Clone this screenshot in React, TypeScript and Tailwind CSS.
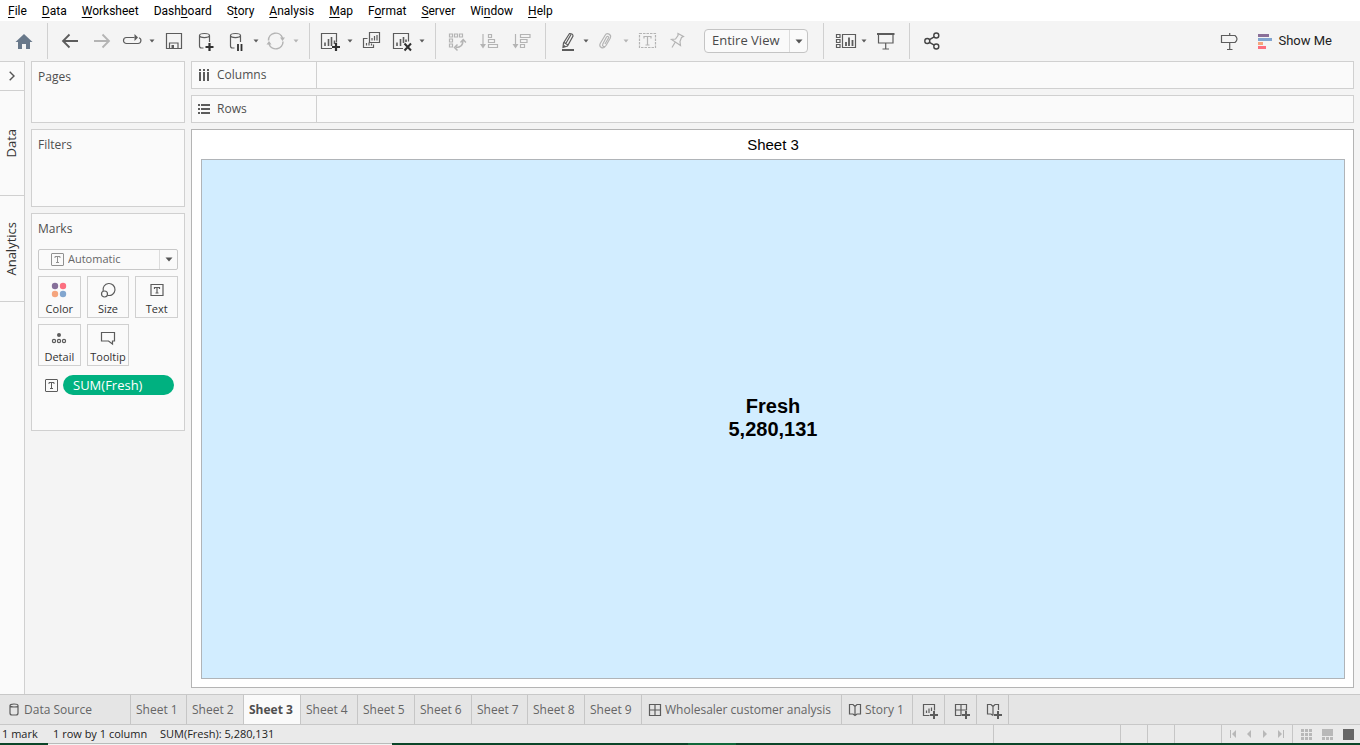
import type { ReactNode } from "react";

type IconProps = { children: ReactNode; className?: string };

function Icon({ children, className = "" }: IconProps) {
  return (
    <svg
      viewBox="0 0 20 20"
      className={`size-5 shrink-0 overflow-visible ${className}`}
      fill="none"
      stroke="currentColor"
      strokeWidth="1.2"
      aria-hidden="true"
    >
      {children}
    </svg>
  );
}

const Plus = ({ x, y, s = 4.5, w = 2 }: { x: number; y: number; s?: number; w?: number }) => (
  <path d={`M${x - s} ${y}H${x + s}M${x} ${y - s}V${y + s}`} strokeWidth={w} />
);

function Caret() {
  return (
    <svg viewBox="0 0 12 6" className="h-[6px] w-3 shrink-0" fill="currentColor" aria-hidden="true">
      <path d="M3.5 1.5h5L6 4.5z" />
    </svg>
  );
}

function Tool({
  label,
  children,
  menu = false,
  off = false,
}: {
  label: string;
  children: ReactNode;
  menu?: boolean;
  off?: boolean;
}) {
  return (
    <button
      type="button"
      aria-label={label}
      className={`flex h-full items-center ${menu ? "w-10" : "w-8 justify-center"} ${off ? "text-[#b4b4b4]" : "text-[#5c5c5c]"}`}
    >
      {menu ? (
        <>
          <span className="flex w-7 justify-center">
            <Icon>{children}</Icon>
          </span>
          <Caret />
        </>
      ) : (
        <Icon>{children}</Icon>
      )}
    </button>
  );
}

function Group({ children }: { children: ReactNode }) {
  return <div className="flex h-9 items-center border-r border-[#d0d0d0] pl-[6px] pr-[7px]">{children}</div>;
}

const Cylinder = ({ x }: { x: number }) => (
  <path
    d={`M${x + 4} 17H${x + 2}Q${x} 17 ${x} 15V4.5M${x + 10} 4.5V11M${x} 4.5C${x} 1.8 ${x + 10} 1.8 ${x + 10} 4.5C${x + 10} 7.2 ${x} 7.2 ${x} 4.5Z`}
  />
);

function TextGlyph({ className = "" }: { className?: string }) {
  return (
    <svg viewBox="0 0 13 13" className={`size-[13px] shrink-0 ${className}`} fill="none" stroke="currentColor" aria-hidden="true">
      <rect x=".5" y=".5" width="12" height="12" rx=".5" />
      <path d="M4 5V3.5h5V5M6.5 3.5v6M5 9.5h3" />
    </svg>
  );
}

const MENUS = [
  ["", "F", "ile"],
  ["", "D", "ata"],
  ["", "W", "orksheet"],
  ["Dash", "b", "oard"],
  ["S", "t", "ory"],
  ["", "A", "nalysis"],
  ["", "M", "ap"],
  ["F", "o", "rmat"],
  ["", "S", "erver"],
  ["Wi", "n", "dow"],
  ["", "H", "elp"],
];

function MenuBar() {
  return (
    <nav className="flex h-[21px] shrink-0 items-center gap-[15px] bg-white pl-2 font-['Roboto',sans-serif] text-[12px] text-black">
      {MENUS.map(([before, key, after]) => (
        <button key={before + key + after} type="button" className="leading-5">
          {before}
          <span className="underline underline-offset-2">{key}</span>
          {after}
        </button>
      ))}
    </nav>
  );
}

function Toolbar() {
  return (
    <div className="flex h-10 shrink-0 items-center">
      <div className="flex h-9 items-center border-r border-[#d0d0d0] pl-2 pr-[7px]">
        <Tool label="Home">
          <path d="M1.5 11L10 3l8.500 8H16v7h-4v-5H8v5H4v-7z" fill="#68788a" stroke="none" />
        </Tool>
      </div>
      <Group>
        <Tool label="Undo">
          <path d="M18 10H3M9.500 3.500L3 10l6.500 6.500" strokeWidth="1.8" />
        </Tool>
        <Tool label="Redo" off>
          <path d="M2 10h15M10.500 3.500L17 10l-6.500 6.500" strokeWidth="1.8" />
        </Tool>
        <Tool label="Replay" menu>
          <path d="M12.500 6.500H4.500a3 3 0 0 0 0 6h11.500a3 3 0 0 0 1-5.800" />
          <path d="M12.500 3v7l3.500-3.500z" fill="currentColor" stroke="none" />
        </Tool>
        <Tool label="Save">
          <path d="M2.500 2.500h15v15h-15zM5.500 17.500v-5.500h8.500v5.500" />
          <path d="M7.500 14h2.500v3.500h-2.500z" fill="currentColor" stroke="none" />
        </Tool>
        <Tool label="New data source">
          <Cylinder x={3.5} />
          <g className="text-[#303030]">
            <Plus x={13.5} y={16} s={4} w={2.2} />
          </g>
        </Tool>
        <Tool label="Pause auto updates" menu>
          <Cylinder x={4.5} />
          <path d="M12 13v7M15.500 13v7" stroke="#303030" strokeWidth="1.8" />
        </Tool>
        <Tool label="Run update" menu off>
          <path d="M2.500 9.500A7.200 7.200 0 0 1 16.500 7M17 10.500A7.200 7.200 0 0 1 3 13" strokeWidth="1.5" />
          <path d="M14 6.500h5l-2.500 3.500zM.500 13.500h5L3 10z" fill="currentColor" stroke="none" />
        </Tool>
      </Group>
      <Group>
        <Tool label="New worksheet" menu>
          <path d="M12 17.500H1.500v-15h15v9" />
          <path d="M5 11.500v3.500M8.500 8v7M11.500 6v9M14.500 9.500V13" strokeWidth="1.6" />
          <g className="text-[#303030]">
            <Plus x={16} y={16} s={4} w={2.2} />
          </g>
        </Tool>
        <Tool label="Duplicate">
          <path d="M7.500 1.500h10v10h-10zM5.500 7.500h-4v9h10v-3M10 7v2.500M12.500 5v4.500M15 4v5.500M4.500 12v2.500M7 11.500v3M9.500 12.500v2" />
        </Tool>
        <Tool label="Clear sheet" menu>
          <path d="M11 17.500H1.500v-15h15v8" />
          <path d="M5 11.500v3.500M8.500 8v7M11.500 6v6M14 8.500V11" strokeWidth="1.6" />
          <path d="M12.500 12.500l6.500 7M19 12.500l-6.500 7" stroke="#303030" strokeWidth="2" />
        </Tool>
      </Group>
      <Group>
        <Tool label="Swap rows and columns" off>
          <path d="M1.500 3h3v3h-3zM6.500 3h3v3h-3zM11.500 3h3v3h-3zM1.500 8h3v3h-3zM1.500 13h3v3h-3z" />
          <path d="M8 16.500q7 0 7-7M12.500 11.500l2.700-3 2.700 3M9.500 13.500l-3 3 3 3" strokeWidth="1.5" />
        </Tool>
        <Tool label="Sort ascending" off>
          <path d="M3 3v13" />
          <path d="M0 13h6l-3 4.500z" fill="currentColor" stroke="none" />
          <path d="M8.500 3.500h3v3h-3zM8.500 8.500h6v3h-6zM8.500 13.500h9v3h-9z" />
        </Tool>
        <Tool label="Sort descending" off>
          <path d="M3.500 3v13" />
          <path d="M.500 13h6l-3 4.500z" fill="currentColor" stroke="none" />
          <path d="M8.500 3.500h9.500v3h-9.500zM8.500 8.500h6.500v3h-6.500zM8.500 13.500h4v3h-4z" />
        </Tool>
      </Group>
      <div className="flex h-9 items-center border-r border-[#d0d0d0] pl-[6px] pr-[15px]">
        <Tool label="Highlight" menu>
          <path d="M13.500 2.500q3.500 0 3.500 2.500l-5.500 10-4.500 1.500 .500-4.500zM8 11.500l4 2.500M9.500 13l5.500-9.500M7 16.500l2-2" />
          <path d="M6 19h12" strokeWidth="2" />
        </Tool>
        <Tool label="Group members" menu off>
          <path d="M4.500 12l4.500-7.500c2-3.500 7-1 5.200 2.700L10 14.500c-1.500 2.300-4.300.700-3.200-1.600L10.500 6c1-1.400 2.600-.400 2 1L9 13M4.500 12c-2.300 4 2.500 6.500 4.700 3.500" />
        </Tool>
        <Tool label="Show mark labels" off>
          <path d="M1.500 2.500h16v14h-16z" strokeDasharray="2.500 1" />
          <path d="M6 7.500V5.500h7v2M9.500 5.500v8.500M7.500 14h4" />
        </Tool>
        <Tool label="Fix axes" off>
          <path d="M8 2.500l5.500 3-2 1-1.500 4 .500 4L1.500 8.500l4-.500 2.500-3.500zM5 11.500l-3 5" />
        </Tool>
        <div className="ml-2 grid h-6 w-[104px] items-center rounded-sm border border-[#c4c4c4] bg-[#fafafa]">
          <select
            aria-label="Fit"
            className="col-start-1 row-start-1 h-full appearance-none bg-transparent pl-[7px] font-['Open_Sans',sans-serif] text-[13px] text-[#4a4a4a]"
          >
            <option>Entire View</option>
            <option>Standard</option>
          </select>
          <span className="pointer-events-none col-start-1 row-start-1 flex h-full w-[18px] items-center justify-center justify-self-end border-l border-[#dcdcdc]">
            <svg viewBox="0 0 8 5" className="h-[5px] w-2 fill-[#555]" aria-hidden="true">
              <path d="M.500.500h7L4 4.500z" />
            </svg>
          </span>
        </div>
      </div>
      <Group>
        <Tool label="Show or hide cards" menu>
          <path d="M8.500 3.500h13v13h-13zM2.500 3.500h3.500v3h-3.500zM2.500 8.500h3.500v3h-3.500zM2.500 13.500h3.500v3h-3.500z" />
          <path d="M12 11v4M15 6.500V15M18.500 9v6" strokeWidth="1.8" />
        </Tool>
        <Tool label="Presentation mode">
          <path d="M1 3h17.500" strokeWidth="2" />
          <path d="M2.500 3v9h14.500v-9M9.700 12v6M6.500 18h6.500" />
        </Tool>
      </Group>
      <div className="flex h-9 items-center pl-[6px]">
        <Tool label="Share">
          <g stroke="#444" strokeWidth="1.4">
            <circle cx="14.300" cy="4.500" r="2.500" />
            <circle cx="5.300" cy="10" r="2.500" />
            <circle cx="14.300" cy="15.500" r="2.500" />
            <path d="M7.500 8.700l4.700-2.900M7.500 11.300l4.700 2.900" />
          </g>
        </Tool>
      </div>
      <div className="ml-auto flex h-full items-center pr-7">
        <Tool label="Guide">
          <path d="M1.500 4.500h13.500q4 3.500 0 7h-13.500zM9.700 2v2.500M9.700 11.500v7M7 18.500h5.500" />
        </Tool>
        <button type="button" className="ml-3 flex items-center gap-[6px] font-['Roboto',sans-serif] text-[13px] text-[#222]">
          <svg viewBox="0 0 14 15" className="h-[15px] w-[14px]" aria-hidden="true">
            <path d="M0 0h11v3H0z" fill="#8a6f98" />
            <path d="M0 4h14v3H0z" fill="#82a5cf" />
            <path d="M0 8h5v3H0z" fill="#f6a47c" />
            <path d="M0 12h8v3H0z" fill="#fd6e7e" />
          </svg>
          Show Me
        </button>
      </div>
    </div>
  );
}

function SideRail() {
  return (
    <aside className="flex w-[25px] shrink-0 flex-col border-r border-t border-[#d0d0d0] bg-[#fafafa] font-['Open_Sans',sans-serif] text-[13px] text-[#333]">
      <button type="button" aria-label="Expand pane" className="flex h-[29px] items-center justify-center border-b border-[#d0d0d0]">
        <svg viewBox="0 0 6 10" className="h-[10px] w-[6px]" fill="none" stroke="#555" strokeWidth="1.4" aria-hidden="true">
          <path d="M.700.700L5 5 .700 9.300" />
        </svg>
      </button>
      <button type="button" className="flex h-[105px] items-center justify-center border-b border-[#d0d0d0]">
        <span className="rotate-180 [writing-mode:vertical-rl]">Data</span>
      </button>
      <button type="button" className="flex h-[106px] items-center justify-center border-b border-[#d0d0d0]">
        <span className="rotate-180 [writing-mode:vertical-rl]">Analytics</span>
      </button>
    </aside>
  );
}

function Card({ title, className, children }: { title: string; className: string; children?: ReactNode }) {
  return (
    <section className={`border border-[#d0d0d0] bg-[#fafafa] px-[6px] pt-[6px] ${className}`}>
      <h2 className="text-[12px] leading-[18px] text-[#4f4f4f]">{title}</h2>
      {children}
    </section>
  );
}

function MarkButton({ label, children }: { label: string; children: ReactNode }) {
  return (
    <button
      type="button"
      className="flex h-[42px] flex-col items-center justify-between border border-[#d0d0d0] pt-[5px] text-[11px] leading-4 text-[#333]"
    >
      <svg viewBox="0 0 16 16" className="size-4 overflow-visible" fill="none" stroke="#5c5c5c" strokeWidth="1.2" aria-hidden="true">
        {children}
      </svg>
      {label}
    </button>
  );
}

function Marks() {
  return (
    <Card title="Marks" className="h-[218px]">
      <div className="mt-[11px] grid h-[21px] items-center rounded-xs border border-[#c8c8c8]">
        <select
          aria-label="Mark type"
          className="col-start-1 row-start-1 h-full w-full appearance-none bg-transparent pl-[29px] text-[11px] text-[#666]"
        >
          <option>Automatic</option>
          <option>Bar</option>
        </select>
        <span className="pointer-events-none col-start-1 row-start-1 flex h-full items-center justify-between pl-3">
          <TextGlyph className="size-[11px] text-[#909090]" />
          <span className="flex h-full w-[18px] items-center justify-center border-l border-[#dcdcdc]">
            <svg viewBox="0 0 8 5" className="h-[5px] w-2 fill-[#555]" aria-hidden="true">
              <path d="M.500.500h7L4 4.500z" />
            </svg>
          </span>
        </span>
      </div>
      <div className="mt-[6px] grid grid-cols-3 gap-[6px]">
        <MarkButton label="Color">
          <g stroke="none">
            <circle cx="4" cy="4" r="3.200" fill="#86709a" />
            <circle cx="12" cy="4" r="3.200" fill="#fc6f80" />
            <circle cx="4" cy="12" r="3.200" fill="#f5a57e" />
            <circle cx="12" cy="12" r="3.200" fill="#82a6cf" />
          </g>
        </MarkButton>
        <MarkButton label="Size">
          <path d="M3.200 9A6 6 0 1 1 7.500 13.300" />
          <circle cx="4.500" cy="12" r="3" />
        </MarkButton>
        <MarkButton label="Text">
          <path d="M2 2.500h12v11H2zM5.500 7V5.500h5V7M8 5.500v5.500M6.500 11h3" />
        </MarkButton>
        <MarkButton label="Detail">
          <circle cx="8" cy="5" r="2" fill="#5c5c5c" stroke="none" />
          <circle cx="3" cy="11" r="1.600" />
          <circle cx="8" cy="11" r="1.600" />
          <circle cx="13" cy="11" r="1.600" />
        </MarkButton>
        <MarkButton label="Tooltip">
          <path d="M1.500 2.500h13v8.500h-2v3L8.500 11h-7z" />
        </MarkButton>
      </div>
      <div className="mt-[9px] flex items-center gap-[5px] pl-[7px] pr-1 text-[#5c5c5c]">
        <TextGlyph />
        <button type="button" className="h-5 grow rounded-full bg-[#00b180] pl-[10px] text-left text-[13px] leading-5 text-white">
          SUM(Fresh)
        </button>
      </div>
    </Card>
  );
}

function Shelf({ label, icon }: { label: string; icon: ReactNode }) {
  return (
    <div className="flex h-7 shrink-0 border border-[#d0d0d0] bg-[#fafafa]">
      <div className="flex w-[125px] items-center gap-[7px] border-r border-[#d0d0d0] pl-[6px] text-[12px] text-[#4f4f4f]">
        <svg viewBox="0 0 12 12" className="size-3" fill="#5c5c5c" shapeRendering="crispEdges" aria-hidden="true">
          {icon}
        </svg>
        {label}
      </div>
    </div>
  );
}

function Workspace() {
  return (
    <main className="flex min-w-0 grow flex-col gap-[6px]">
      <Shelf
        label="Columns"
        icon={<path d="M1 0h2v2H1zM5 0h2v2H5zM9 0h2v2H9zM1 3h2v9H1zM5 3h2v9H5zM9 3h2v9H9z" />}
      />
      <Shelf
        label="Rows"
        icon={<path d="M0 1h2v2H0zM0 5h2v2H0zM0 9h2v2H0zM3 1h9v2H3zM3 5h9v2H3zM3 9h9v2H3z" />}
      />
      <section className="flex grow flex-col border border-[#b4b4b4] bg-white pb-2 pl-[9px] pr-2 font-['Liberation_Sans',sans-serif] text-black">
        <h1 className="text-center text-[15px] leading-[29px]">Sheet 3</h1>
        <div className="flex grow flex-col items-center justify-center border border-[#b0b4b8] bg-[#d2edff] pb-[2px] text-[20px] font-bold leading-[23px]">
          <p>Fresh</p>
          <p>5,280,131</p>
        </div>
      </section>
    </main>
  );
}

const gridPath = "M1.500 1.500h11v11h-11zM7 1.500v11M1.500 7h11";
const bookPath = "M7 3.500v9M7 3.500L5 1.500H1.500v9.500H5l2 1.500 2-1.500h3.500V1.500H9z";

function TabIcon({ children }: { children: ReactNode }) {
  return (
    <svg
      viewBox="0 0 14 14"
      className="size-[14px] shrink-0 overflow-visible"
      fill="none"
      stroke="#5c5c5c"
      strokeWidth="1.200"
      aria-hidden="true"
    >
      {children}
    </svg>
  );
}

const tabClass = "flex h-full shrink-0 items-center border-r border-[#c6c6c6]";

function SheetTabs() {
  return (
    <nav className="flex h-[31px] shrink-0 items-center border-y border-[#c8c8c8] bg-[#e5e5e5] text-[12px] text-[#666]">
      <button type="button" className={`${tabClass} w-[131px] gap-[3px] pl-[7px]`}>
        <TabIcon>
          <path d="M3 2.500v7.500q0 2 2 2h4q2 0 2-2V2.500M3 2.500c0-2 8-2 8 0s-8 2-8 0z" />
        </TabIcon>
        Data Source
      </button>
      {[1, 2, 3, 4, 5, 6, 7, 8, 9].map((n) => (
        <button
          key={n}
          type="button"
          className={`${tabClass} ${n === 1 || n === 7 ? "w-14" : "w-[57px]"} ${n === 3 ? "bg-[#fafafa] pl-[5px] font-bold text-[#4f4f4f]" : "pl-[5px]"}`}
        >
          Sheet {n}
        </button>
      ))}
      <button type="button" className={`${tabClass} w-[200px] gap-[3px] pl-[6px]`}>
        <TabIcon>
          <path d={gridPath} />
        </TabIcon>
        Wholesaler customer analysis
      </button>
      <button type="button" className={`${tabClass} w-[71px] gap-[3px] pl-[6px]`}>
        <TabIcon>
          <path d={bookPath} />
        </TabIcon>
        Story 1
      </button>
      <button type="button" aria-label="New worksheet" className={`${tabClass} w-8 justify-center`}>
        <TabIcon>
          <path d="M7.500 12.500h-6v-11h11v6M4.500 7.500V10M7 5.500V10M9.500 4.500V8" />
          <Plus x={12} y={12} s={4} w={2} />
        </TabIcon>
      </button>
      <button type="button" aria-label="New dashboard" className={`${tabClass} w-8 justify-center`}>
        <TabIcon>
          <path d="M7.500 12.500h-6v-11h11v6M7 1.500v11M1.500 7h11" />
          <Plus x={12} y={12} s={4} w={2} />
        </TabIcon>
      </button>
      <button type="button" aria-label="New story" className={`${tabClass} w-8 justify-center`}>
        <TabIcon>
          <path d="M7 3.500v9M7 3.500L5 1.500H1.500v9.500H5l2 1.500M7 3.500L9 1.500h3.500V7" />
          <Plus x={12} y={12} s={4} w={2} />
        </TabIcon>
      </button>
    </nav>
  );
}

function NavArrow({ label, d }: { label: string; d: string }) {
  return (
    <button type="button" aria-label={label} className="flex w-4 justify-center">
      <svg viewBox="0 0 8 8" className="size-2" fill="#b8b8b8" aria-hidden="true">
        <path d={d} />
      </svg>
    </button>
  );
}

function StatusBar() {
  const cell = "h-full border-l border-[#c6c6c6]";
  return (
    <footer className="shrink-0 bg-[#eaeaea] text-[11px] text-[#222]">
      <div className="flex h-[18px] items-center">
        <span className="w-[51px] pl-[2px]">1 mark</span>
        <span className="w-[106px] pl-[2px]">1 row by 1 column</span>
        <span className="pl-[3px]">SUM(Fresh): 5,280,131</span>
        <div className="ml-auto flex h-full items-center">
          <div className={`${cell} w-[127px]`} />
          <div className={`${cell} w-[27px]`} />
          <div className={`${cell} w-[27px]`} />
          <div className={`${cell} w-[47px]`} />
          <div className={`${cell} flex w-[71px] items-center pl-[3px]`}>
            <NavArrow label="First sheet" d="M1 0h1v8H1zM7 0v8L3 4z" />
            <NavArrow label="Previous sheet" d="M6 0v8L2 4z" />
            <NavArrow label="Next sheet" d="M2 0v8l4-4z" />
            <NavArrow label="Last sheet" d="M1 0v8l4-4zM6 0h1v8H6z" />
          </div>
          <div className={`${cell} flex w-[68px] items-center gap-[10px] pl-2`}>
            <button type="button" aria-label="Show sheet sorter">
              <svg viewBox="0 0 11 11" className="size-[11px]" fill="#b8b8b8" aria-hidden="true">
                <path d="M0 0h3v3H0zM4 0h3v3H4zM8 0h3v3H8zM0 4h3v3H0zM4 4h3v3H4zM8 4h3v3H8zM0 8h3v3H0zM4 8h3v3H4zM8 8h3v3H8z" />
              </svg>
            </button>
            <button type="button" aria-label="Show filmstrip">
              <svg viewBox="0 0 11 11" className="size-[11px]" fill="#b8b8b8" aria-hidden="true">
                <path d="M0 0h11v7H0zM0 8h3v3H0zM4 8h3v3H4zM8 8h3v3H8z" />
              </svg>
            </button>
            <button type="button" aria-label="Show tabs" className="size-[11px] bg-[#666]" />
          </div>
        </div>
      </div>
      <div className="flex h-[2px] bg-[#0b4629]">
        <div className="ml-12 w-[344px] border-t border-[#b8bcba] bg-[#f2f4f3]" />
        <div className="ml-[296px] w-12 bg-[#10683a]" />
      </div>
    </footer>
  );
}

export default function App() {
  return (
    <div className="flex h-screen flex-col overflow-hidden bg-[#f4f4f4] font-['Open_Sans',sans-serif]">
      <MenuBar />
      <Toolbar />
      <div className="flex min-h-0 grow">
        <SideRail />
        <div className="flex min-w-0 grow gap-[6px] px-[6px] pb-[6px]">
          <div className="flex w-[154px] shrink-0 flex-col gap-[6px]">
            <Card title="Pages" className="h-[62px]" />
            <Card title="Filters" className="h-[78px]" />
            <Marks />
          </div>
          <Workspace />
        </div>
      </div>
      <SheetTabs />
      <StatusBar />
    </div>
  );
}
